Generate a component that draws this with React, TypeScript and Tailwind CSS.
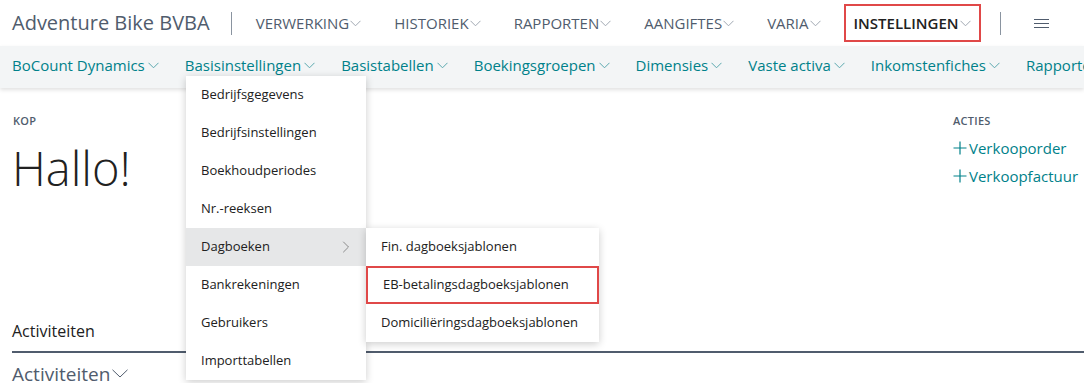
import { ChevronRight } from 'lucide-react'

const font = { fontFamily: '"Segoe UI", "Open Sans", "Noto Sans", sans-serif' }

function Chevron({ className = '' }: { className?: string }) {
  return (
    <svg width="11" height="7" viewBox="0 0 11 7" className={className} fill="none">
      <polyline points="0.5,0.8 5.5,5.8 10.5,0.8" stroke="currentColor" strokeWidth="1" />
    </svg>
  )
}

function Plus() {
  return (
    <svg width="14" height="14" viewBox="0 0 14 14" className="mr-[2px]" fill="none">
      <path d="M7 0.5v13M0.5 7h13" stroke="currentColor" strokeWidth="1.2" />
    </svg>
  )
}

const topItems = ['VERWERKING', 'HISTORIEK', 'RAPPORTEN', 'AANGIFTES', 'VARIA']
const subItems = ['BoCount Dynamics', 'Basisinstellingen', 'Basistabellen', 'Boekingsgroepen', 'Dimensies', 'Vaste activa', 'Inkomstenfiches', 'Rapporten']
const menuItems = ['Bedrijfsgegevens', 'Bedrijfsinstellingen', 'Boekhoudperiodes', 'Nr.-reeksen', 'Dagboeken', 'Bankrekeningen', 'Gebruikers', 'Importtabellen']
const journalItems = ['Fin. dagboeksjablonen', 'EB-betalingsdagboeksjablonen', 'Domiciliëringsdagboeksjablonen']

export default function App() {
  return (
    <div className="relative w-[1084px] h-[383px] overflow-hidden bg-white" style={font}>
      {/* top bar */}
      <div className="flex items-center h-[46px] pl-[12px] text-[#505c6d] whitespace-nowrap">
        <span className="text-[20px] leading-none">Adventure Bike BVBA</span>
        <div className="w-px h-[23px] bg-[#8a94a0] ml-[21px] mr-[24px]" />
        <div className="flex items-center gap-[33px] text-[15px] text-[#505c6d]">
          {topItems.map((t) => (
            <span key={t} className="flex items-center">
              {t}
              <Chevron className="ml-[1px] text-[#a0a8b2]" />
            </span>
          ))}
          <span className="flex items-center font-semibold text-[#212121] pl-[8px] pr-[8px] h-[38px] -ml-[10px] border-2 border-[#e04848]">
            INSTELLINGEN
            <Chevron className="ml-[1px] text-[#a0a8b2]" />
          </span>
        </div>
        <div className="w-px h-[23px] bg-[#8a94a0] ml-[19px]" />
        <div className="ml-[33px] flex flex-col gap-[3px]">
          <div className="w-[15px] h-px bg-[#505c6d]" />
          <div className="w-[15px] h-px bg-[#505c6d]" />
          <div className="w-[15px] h-px bg-[#505c6d]" />
        </div>
      </div>

      {/* second bar */}
      <div className="flex items-center h-[42px] pb-[4px] bg-[#f3f5f6] pl-[12px] gap-[26px] text-[15px] text-[#00818a] whitespace-nowrap shadow-[0_2px_4px_rgba(0,0,0,0.12)]">
        {subItems.map((t, i) => (
          <span key={t} className="flex items-center">
            {t}
            {i < subItems.length - 1 && <Chevron className="ml-[3px] text-[#5aa8ae]" />}
          </span>
        ))}
      </div>

      {/* body */}
      <div className="flex justify-between pl-[13px] pt-[25px]">
        <div>
          <div className="text-[11px] font-semibold text-[#505c6d] tracking-wide">KOP</div>
          <div className="text-[47px] font-light text-[#212121] leading-none mt-[15px] -ml-[1px]">Hallo!</div>
        </div>
        <div className="w-[131px] text-[#00818a]">
          <div className="text-[11px] font-semibold text-[#505c6d] tracking-wide">ACTIES</div>
          <div className="flex items-center mt-[7px] text-[15px] whitespace-nowrap">
            <Plus />Verkooporder
          </div>
          <div className="flex items-center mt-[6px] text-[15px] whitespace-nowrap">
            <Plus />Verkoopfactuur
          </div>
        </div>
      </div>

      <div className="mt-[127px] pl-[12px]">
        <div className="text-[16px] text-[#212121] pb-[8px]">Activiteiten</div>
        <div className="h-[2px] bg-[#505c6d]" />
        <div className="flex items-center text-[19px] text-[#505c6d] mt-[7px]">
          Activiteiten
          <svg width="16" height="9" viewBox="0 0 16 9" className="ml-[2px]" fill="none">
            <polyline points="0.5,0.8 8,8 15.5,0.8" stroke="currentColor" strokeWidth="1" />
          </svg>
        </div>
      </div>

      {/* dropdown */}
      <div className="absolute left-[186px] top-[76px] w-[180px] bg-white shadow-[0_2px_8px_rgba(0,0,0,0.2)] text-[13px] text-[#212121]">
        {menuItems.map((t) => (
          <div
            key={t}
            className={`flex items-center justify-between h-[38px] pl-[15px] pr-[10px] ${t === 'Dagboeken' ? 'bg-[#e6e7e8]' : ''}`}
          >
            {t}
            {t === 'Dagboeken' && <ChevronRight size={20} strokeWidth={0.9} className="text-[#6b6b6b]" />}
          </div>
        ))}
      </div>

      {/* submenu */}
      <div className="absolute left-[366px] top-[228px] w-[233px] bg-white shadow-[0_2px_8px_rgba(0,0,0,0.2)] text-[13px] text-[#212121]">
        {journalItems.map((t, i) => (
          <div
            key={t}
            className={`flex items-center h-[38px] pl-[15px] ${i === 1 ? 'border-2 border-[#e04848] pl-[13px]' : ''}`}
          >
            {t}
          </div>
        ))}
      </div>
    </div>
  )
}
